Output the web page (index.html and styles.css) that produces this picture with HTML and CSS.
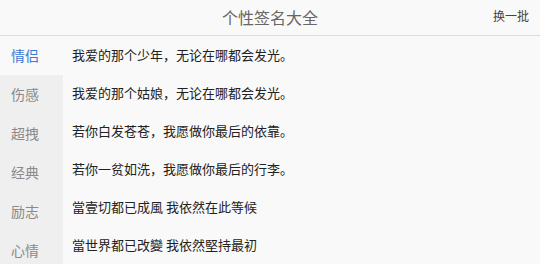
FILE: index.html
```html
<!DOCTYPE html>
<html lang="zh-CN">
<head>
<meta charset="utf-8">
<title>个性签名大全</title>
<link rel="stylesheet" href="styles.css">
</head>
<body>
<div class="app">
  <header class="header">
    <div class="title">个性签名大全</div>
    <div class="refresh">换一批</div>
  </header>
  <div class="body">
    <nav class="sidebar">
      <div class="cat active">情侣</div>
      <div class="cat">伤感</div>
      <div class="cat">超拽</div>
      <div class="cat">经典</div>
      <div class="cat">励志</div>
      <div class="cat">心情</div>
    </nav>
    <main class="list">
      <div class="row">我爱的那个少年，无论在哪都会发光。</div>
      <div class="row">我爱的那个姑娘，无论在哪都会发光。</div>
      <div class="row">若你白发苍苍，我愿做你最后的依靠。</div>
      <div class="row">若你一贫如洗，我愿做你最后的行李。</div>
      <div class="row">當壹切都已成風 我依然在此等候</div>
      <div class="row">當世界都已改變 我依然堅持最初</div>
    </main>
  </div>
</div>
</body>
</html>
```
FILE: styles.css
```css
html, body {
  margin: 0;
  padding: 0;
}
body {
  width: 540px;
  height: 264px;
  overflow: hidden;
  background: #f9f9f9;
  font-family: "Noto Sans CJK SC", "Noto Sans", sans-serif;
}
.app {
  display: flex;
  flex-direction: column;
  height: 264px;
}
.header {
  position: relative;
  height: 35px;
  border-bottom: 1px solid #dcdcdc;
  display: flex;
  align-items: center;
  justify-content: center;
  background: #f9f9f9;
}
.title {
  font-size: 16px;
  color: #666;
  line-height: 35px;
}
.refresh {
  position: absolute;
  right: 11px;
  top: 0;
  line-height: 32px;
  font-size: 12px;
  color: #444;
}
.body {
  display: flex;
  flex: 1;
  min-height: 0;
}
.sidebar {
  width: 63px;
  background: #efefef;
  display: flex;
  flex-direction: column;
}
.cat {
  height: 39px;
  line-height: 39px;
  padding-left: 11px;
  font-size: 14px;
  color: #8a8a8a;
}
.cat.active {
  background: #f9f9f9;
  color: #3b78d8;
}
.list {
  flex: 1;
  padding-left: 9px;
}
.row {
  height: 38px;
  line-height: 38px;
  font-size: 13px;
  color: #222;
}
```
